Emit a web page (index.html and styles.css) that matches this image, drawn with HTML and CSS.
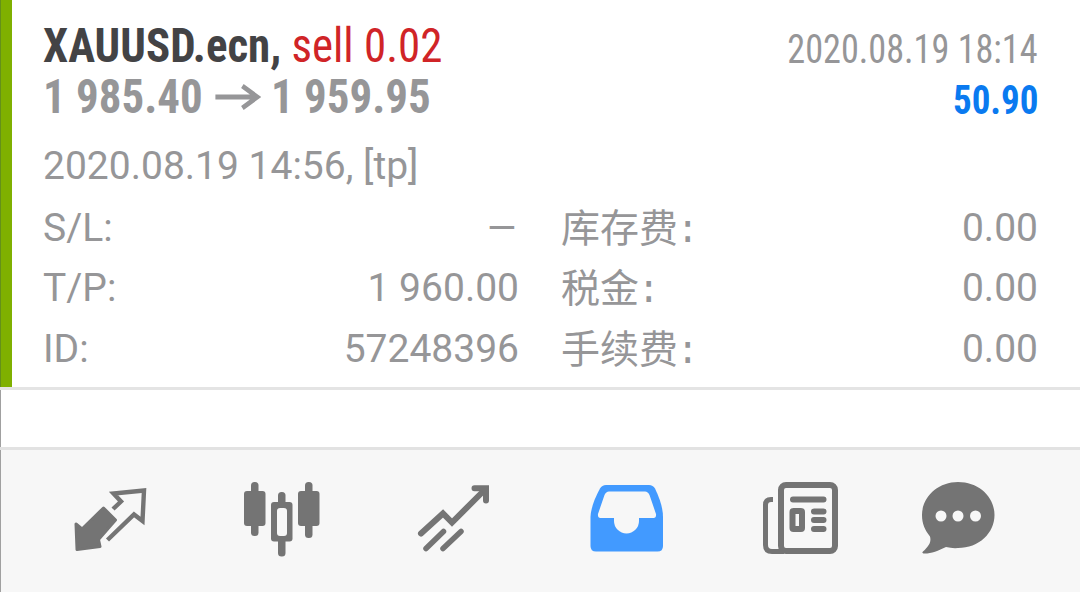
FILE: index.html
```html
<!DOCTYPE html>
<html lang="zh-CN">
<head>
<meta charset="utf-8">
<title>XAUUSD.ecn</title>
<link rel="stylesheet" href="styles.css">
</head>
<body>
<main class="screen">
  <article class="deal">
    <div class="deal-line">
      <div class="symbol"><b>XAUUSD.ecn,</b> <span class="sell">sell 0.02</span></div>
      <div class="closed">2020.08.19 18:14</div>
    </div>
    <div class="deal-line">
      <div class="prices"><b>1 985.40</b><svg class="arrow" viewBox="0 0 49 32" fill="none" stroke="#969698" stroke-width="4.8"><path d="M0 16H45M29 5L45 16L29 27"/></svg><b>1 959.95</b></div>
      <div class="profit">50.90</div>
    </div>
    <div class="opened">2020.08.19 14:56, [tp]</div>
    <div class="details">
      <span>S/L:</span><span class="value"><span class="dash">–</span></span>
      <span class="cjk">库存费<i>:</i></span><span class="value">0.00</span>
      <span>T/P:</span><span class="value">1 960.00</span>
      <span class="cjk">税金<i>:</i></span><span class="value">0.00</span>
      <span>ID:</span><span class="value">57248396</span>
      <span class="cjk">手续费<i>:</i></span><span class="value">0.00</span>
    </div>
  </article>
  <nav class="tabs">
    <svg class="tab" viewBox="50 470 130 100"><path fill="#747474" stroke="#747474" stroke-width="3" stroke-linejoin="round" d="M76 524L82 529L103.500 508L115.500 520L98.500 539.500L100 546.500L77 549.500Z"/><path fill="none" stroke="#747474" stroke-width="4.400" stroke-linejoin="miter" d="M113 509L121 501.500L113.500 493.500L144 490.500L142.500 521L134 514.500L107.500 540"/></svg>
    <svg class="tab" viewBox="220 470 130 100" fill="#747474"><rect x="251" y="482" width="7.500" height="54" rx="3.500"/><rect x="244" y="491" width="21.500" height="35" rx="3"/><rect x="305" y="482" width="7.500" height="56" rx="3.500"/><rect x="298" y="491" width="21.500" height="35" rx="3"/><rect x="278" y="492" width="7.500" height="64.500" rx="3.500"/><rect x="271" y="502" width="21.500" height="39.500" rx="3"/><rect x="277" y="508" width="10" height="28" rx="3" fill="#f7f7f7"/></svg>
    <svg class="tab" viewBox="395 470 130 100" fill="none" stroke="#747474" stroke-width="6" stroke-linecap="round"><path d="M421 533.500L443 513.500L452 522.500L485 489.500"/><path d="M474.500 488.200H486V500.500"/><path fill="#747474" stroke="none" d="M479 488H487V497Z"/><path stroke-width="5.500" d="M426 548.500L443.500 531.500M443 548.500L461 531.500"/></svg>
    <svg class="tab" viewBox="565 470 130 100"><path fill="#429aff" d="M606 485H649Q653 485 655 488.500Q663 505 663 517V546Q663 551.500 657.500 551.500H596Q590.500 551.500 590.500 546V517Q591 505 600 488.500Q602 485 606 485Z"/><path fill="#f7f7f7" d="M609 491.500H645Q648 491.500 649.500 495L656 514Q656.500 518 653.500 518H639V521A12.500 12.500 0 0 1 614 521V518H600.500Q597.500 518 598 514L604.500 495Q606 491.500 609 491.500Z"/></svg>
    <svg class="tab" viewBox="740 470 130 100" fill="none" stroke="#747474" stroke-width="6" stroke-linecap="round"><rect x="781" y="485" width="54" height="66" rx="5"/><path stroke-width="5" stroke-linecap="butt" d="M773 499.500H771Q765.500 499.500 765.500 505V545Q765.500 551.500 772 551.500H784"/><path d="M793 499.500H823.500M814 511.500H823.500M814 520H823.500M814 529H823.500"/><rect x="792.500" y="511" width="9.500" height="18" rx="1"/></svg>
    <svg class="tab" viewBox="900 470 130 100"><path fill="#747474" d="M958 482C979 482 994.500 497 994.500 515C994.500 533 979 548 958 548Q952 548.500 946 547C938 551 930 554 923.500 553.500Q921.500 553 923 551.500C929 546 931.500 542 930 536.500C925 530 922 524 922 515C922 497 938 482 958 482Z"/><g fill="#f7f7f7"><circle cx="941" cy="516" r="5.500"/><circle cx="958" cy="516" r="5.500"/><circle cx="975.500" cy="516" r="5.500"/></g></svg>
  </nav>
</main>
</body>
</html>
```
FILE: styles.css
```css
* { box-sizing: border-box; }
body { margin: 0; background: #fff; font-family: Roboto, "Noto Sans CJK SC", sans-serif; color: #969698; }
.screen { display: flex; flex-direction: column; justify-content: space-between; width: 1080px; height: 592px; overflow: hidden; background: linear-gradient(#a0a0a0, #a0a0a0) 0 0 / 1px 100% no-repeat; }
.deal { height: 390px; padding: 20px 42px 0 43px; border-bottom: 3px solid #e4e4e4; background: linear-gradient(90deg, #64901a 1px, #7fb000 1px) 0 0 / 12px 387px no-repeat; }
.deal-line { display: flex; justify-content: space-between; height: 51px; line-height: 51px; font-size: 48px; white-space: nowrap; font-family: "Roboto Condensed", Roboto, sans-serif; }
.symbol, .prices { transform: scaleX(.936); transform-origin: left; }
.symbol b { color: #434345; }
.sell { color: #d02427; }
.prices { display: flex; align-items: center; }
.arrow { width: 49px; height: 32px; margin: 0 11px 0 13px; }
.closed, .profit { font-size: 40px; line-height: 59px; transform: scaleX(.905); transform-origin: right; }
.profit { font-weight: 700; color: #0a7af0; transform: scaleX(.925); }
.opened { height: 60.600px; margin-top: 14px; line-height: 61px; font-size: 39px; }
.details { display: grid; grid-template-columns: 150px 326px 150px 1fr; grid-auto-rows: 60.600px; line-height: 62px; font-size: 39px; white-space: nowrap; }
.value { text-align: right; }
.dash { display: inline-block; transform: scaleX(1.28); transform-origin: right; }
.cjk { padding-left: 42px; line-height: 64px; }
.cjk i { margin-left: -2px; font-family: "Liberation Mono", monospace; font-style: normal; }
.tabs { display: flex; height: 145px; padding: 20px 0 0 50px; border-top: 3px solid #e2e2e2; background: linear-gradient(90deg, #a0a0a0 1px, #f7f7f7 1px); }
.tab { width: 130px; height: 100px; flex: none; margin-right: 40px; }
.tab:nth-child(even) { margin-right: 45px; }
.tab:nth-child(5) { margin-right: 30px; }
```
